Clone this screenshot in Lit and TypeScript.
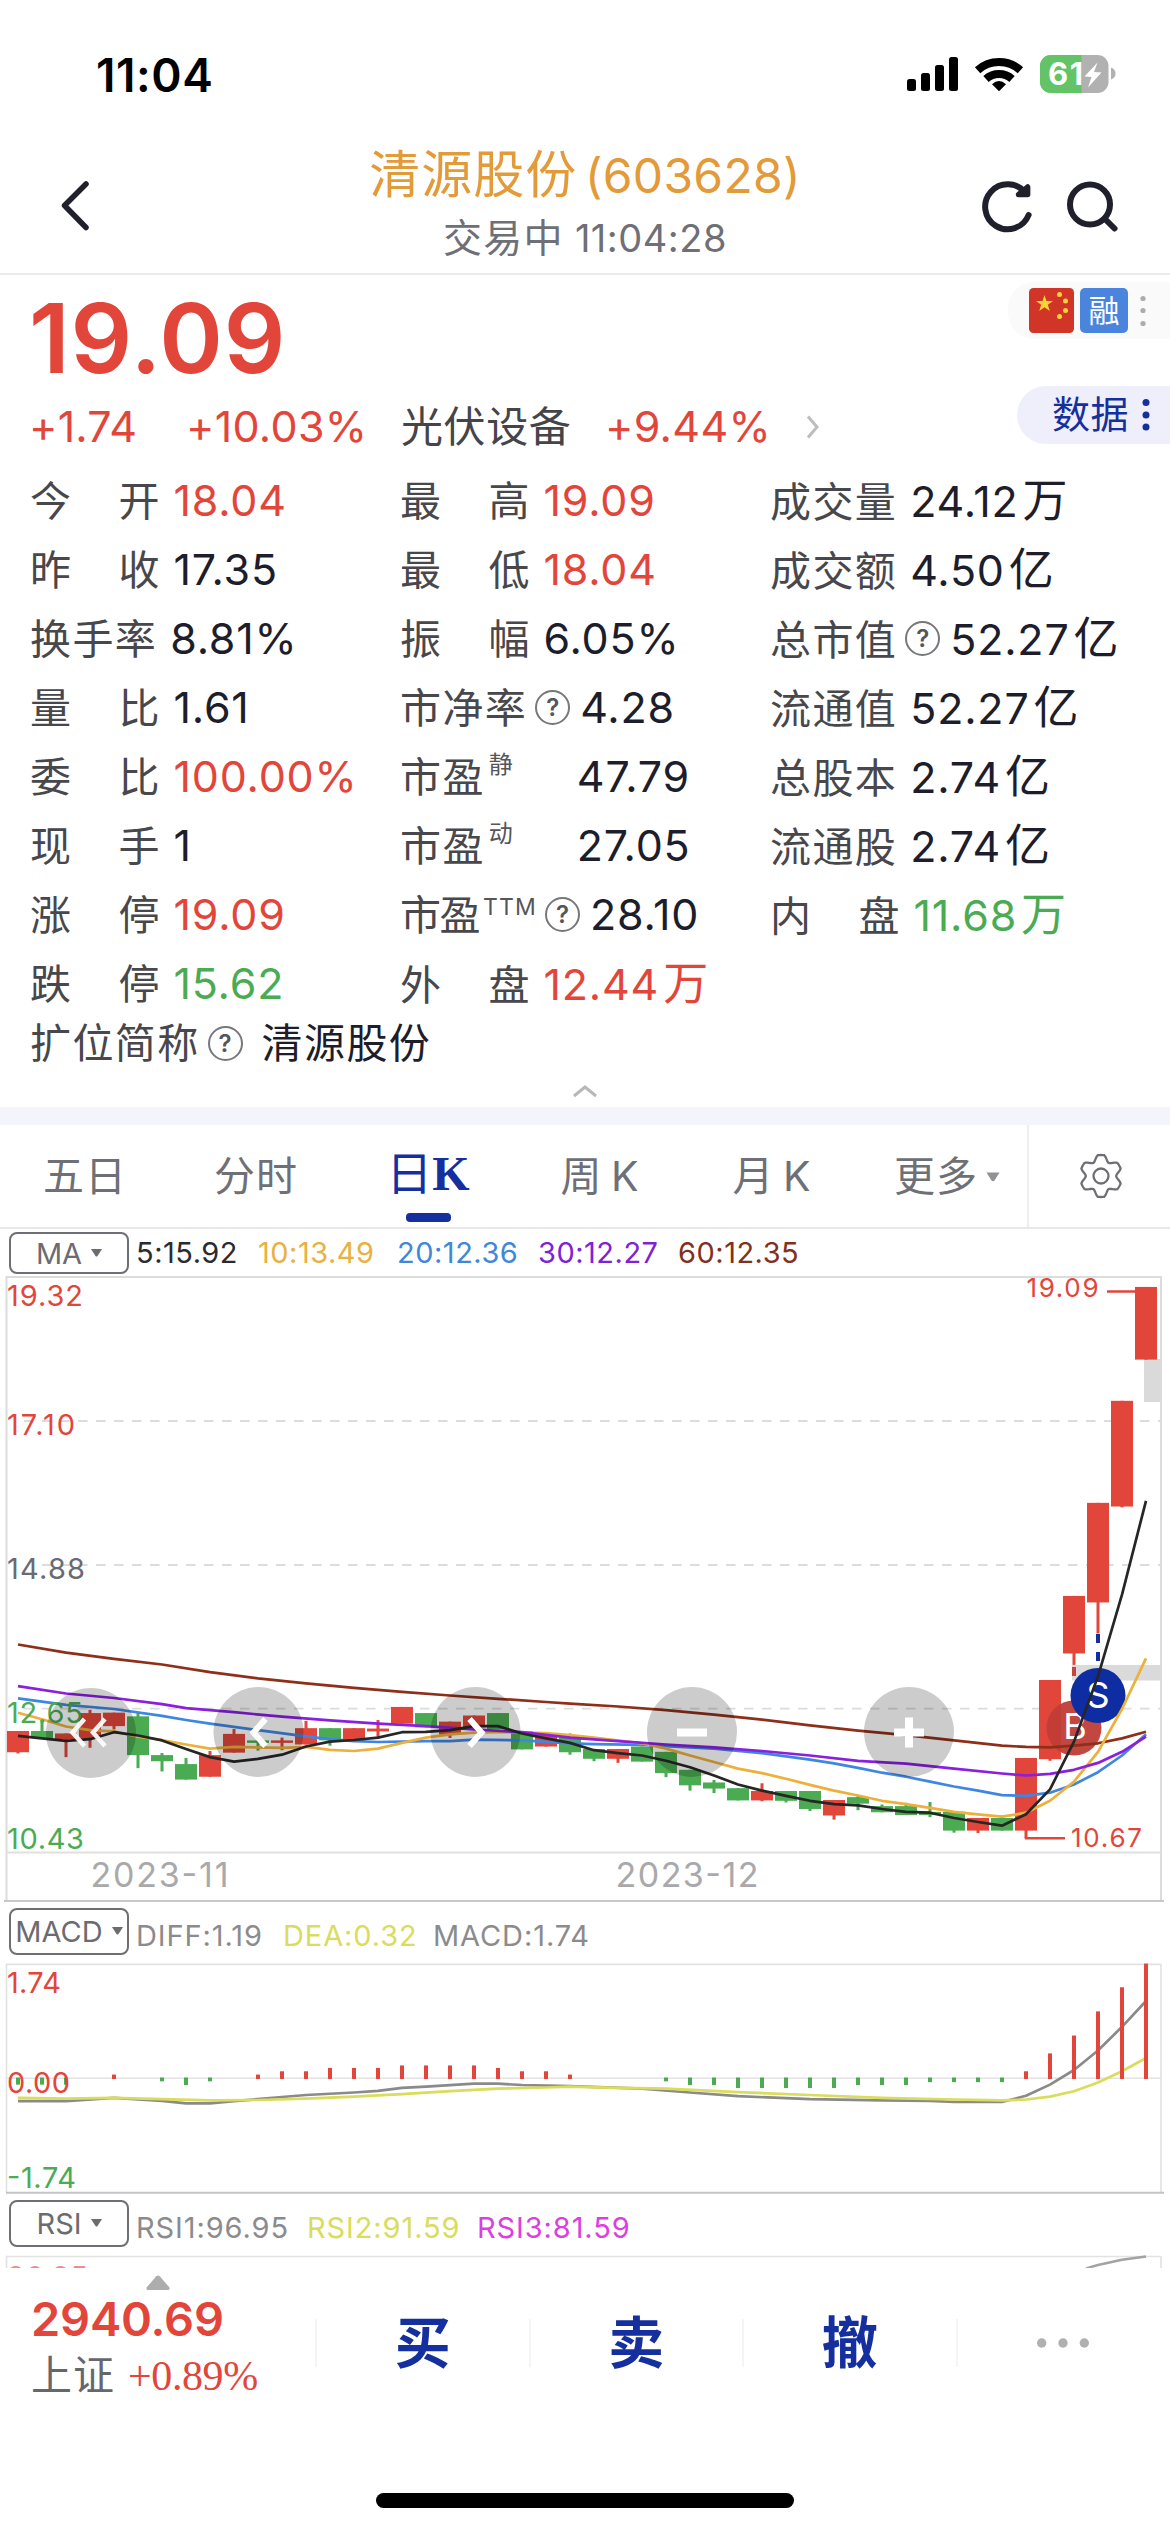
import { LitElement, html, css, svg } from "lit";
import { customElement, property } from "lit/decorators.js";
import { classMap } from "lit/directives/class-map.js";

const RED = "#e2463a";
const GREEN = "#4bab52";
const BLUE = "#152f9e";

/* ---------- status bar ---------- */
@customElement("status-bar")
class StatusBar extends LitElement {
  static styles = css`
    :host { display: flex; height: 138px; justify-content: space-between; padding: 0 54px 0 96px; box-sizing: border-box; }
    .time { font-size: 46px; font-weight: 600; line-height: 54px; margin-top: 48px; color: #000; letter-spacing: 0.6px; }
    .icons { width: 210px; height: 40px; margin-top: 54px; }
    .level { font-size: 31px; font-weight: 700; fill: #fff; }
  `;
  render() {
    return html`
      <div class="time">11:04</div>
      <svg class="icons" viewBox="906 54 210 40">
        <rect x="907" y="79" width="9" height="12" rx="2.5" />
        <rect x="921" y="73" width="9" height="18" rx="2.5" />
        <rect x="935" y="65" width="9" height="26" rx="2.5" />
        <rect x="949" y="57" width="9" height="34" rx="2.5" />
        <g fill="none" stroke="#000" stroke-width="8">
          <path d="M977.6 70.2 A32 32 0 0 1 1020.4 70.2" />
          <path d="M986 79 A19.5 19.5 0 0 1 1012 79" />
        </g>
        <path d="M992 84.3 Q999 77.6 1006 84.3 L999 91.3 Z" />
        <clipPath id="cell"><rect x="1040" y="55" width="68.500" height="38" rx="11" /></clipPath>
        <g clip-path="url(#cell)">
          <rect x="1040" y="54" width="70" height="40" fill="#b1b1b1" />
          <rect x="1040" y="54" width="41.500" height="40" fill="#62c466" />
        </g>
        <path d="M1111 67.500 Q1115.500 69 1115.500 73.500 Q1115.500 78 1111 79.500 Z" fill="#b1b1b1" />
        <text class="level" x="1048" y="85.300" textLength="35">61</text>
        <path d="M1097.500 62.500 L1084.500 76.500 L1091.500 77 L1088 87.500 L1101.500 72.500 L1094 72 Z" fill="#fff" />
      </svg>
    `;
  }
}

/* ---------- title bar ---------- */
@customElement("title-bar")
class TitleBar extends LitElement {
  static styles = css`
    :host { display: grid; grid-template-columns: 300px 1fr 300px; height: 137px; box-sizing: border-box; border-bottom: 2px solid #ebebed; }
    .back { width: 32px; height: 54px; margin: 40px 0 0 59px; }
    .center { display: flex; flex-direction: column; align-items: center; }
    .name { font-size: 48px; line-height: 60px; margin-top: 7px; color: #e39a38; white-space: nowrap; letter-spacing: 0.3px; word-spacing: -6px; }
    .cn { font-size: 51px; letter-spacing: 1px; }
    .state { font-size: 38px; line-height: 46px; margin-top: 9px; color: #6e6f77; white-space: nowrap; letter-spacing: 0.5px; }
    .state .cn { font-size: 39px; letter-spacing: 1.2px; }
    .tools { width: 150px; height: 60px; margin: 38px 0 0 104px; }
  `;
  render() {
    return html`
      <svg class="back" viewBox="59 178 32 54" fill="none" stroke="#20202c" stroke-width="5.500" stroke-linecap="round" stroke-linejoin="round">
        <path d="M86 184 L64.500 205.500 L86 227.500" />
      </svg>
      <div class="center">
        <div class="name"><span class="cn">清源股份</span> (603628)</div>
        <div class="state"><span class="cn">交易中</span> 11:04:28</div>
      </div>
      <svg class="tools" viewBox="974 176 150 60" fill="none" stroke="#20202c" stroke-width="6" stroke-linecap="round" stroke-linejoin="round">
        <path d="M1028.600 215 A22.500 22.500 0 1 1 1025.500 193" />
        <path d="M1027.600 187 V194.500 H1018.500 Z" stroke-width="5.500" fill="#20202c" />
        <circle cx="1090" cy="204.500" r="20" />
        <path d="M1105.500 219.500 L1114.500 228.500" />
      </svg>
    `;
  }
}

/* ---------- price block ---------- */
@customElement("price-block")
class PriceBlock extends LitElement {
  static styles = css`
    :host { display: flex; justify-content: space-between; height: 191px; }
    .left { padding-left: 29px; display: flex; flex-direction: column; }
    .price { font-size: 96.500px; font-weight: 600; line-height: 110px; margin-top: 8px; color: #e2463a; letter-spacing: 0.8px; }
    .line { display: flex; align-items: baseline; font-size: 43px; line-height: 56px; margin-top: 5px; color: #e2463a; white-space: nowrap; font-weight: 400; }
    .chg { width: 157px; letter-spacing: 0.2px; }
    .pct { width: 215px; letter-spacing: 0.3px; }
    .sector { width: 204px; color: #454549; font-size: 42px; letter-spacing: 0.6px; }
    .spct { width: 199px; letter-spacing: 0.3px; }
    .go { width: 16px; height: 26px; align-self: center; }
    .right { display: flex; flex-direction: column; align-items: flex-end; }
    .tags { display: flex; align-items: center; box-sizing: border-box; height: 57px; width: 162px; margin-top: 7px; padding-left: 21px; background: #fafafa; border-radius: 26px 0 0 26px; }
    .flag { width: 45px; height: 45px; }
    .rong { width: 48px; height: 45px; margin-left: 6px; border-radius: 5px; background: #4a84dc; color: #fff; font-size: 31px; line-height: 45px; text-align: center; }
    .dots { width: 8px; height: 40px; margin-left: 11px; }
    .data { display: flex; align-items: center; box-sizing: border-box; height: 58px; width: 153px; margin-top: 47px; padding-left: 35px; background: #eeeffb; border-radius: 29px 0 0 29px; color: #152f9e; font-size: 38px; letter-spacing: 0.5px; }
    .data span { line-height: 40px; padding-bottom: 2px; }
    .data .dots { margin-left: 13px; }
  `;
  render() {
    return html`
      <div class="left">
        <div class="price">19.09</div>
        <div class="line">
          <span class="chg">+1.74</span><span class="pct">+10.03%</span><span class="sector">光伏设备</span><span class="spct">+9.44%</span>
          <svg class="go" viewBox="0 0 16 26" fill="none" stroke="#bdbdbd" stroke-width="3"><path d="M4 2.500 L13 13 L4 23.500" /></svg>
        </div>
      </div>
      <div class="right">
        <div class="tags">
          <svg class="flag" viewBox="0 0 45 45">
            <rect width="45" height="45" rx="4.500" fill="#d03527" />
            <g fill="#fbd338">
              <path d="M15.500 7 L17.500 13 L24 13 L18.800 16.800 L20.800 23 L15.500 19.200 L10.200 23 L12.200 16.800 L7 13 L13.500 13 Z" />
              <circle cx="30.500" cy="6.500" r="2.500" /><circle cx="36.500" cy="13" r="2.500" />
              <circle cx="36.500" cy="22.500" r="2.500" /><circle cx="30.500" cy="28.500" r="2.500" />
            </g>
          </svg>
          <span class="rong">融</span>
          <svg class="dots" viewBox="0 0 8 40" fill="#acacac"><circle cx="4" cy="7.500" r="2.600" /><circle cx="4" cy="19.500" r="2.600" /><circle cx="4" cy="32.500" r="2.600" /></svg>
        </div>
        <div class="data">
          <span>数据</span>
          <svg class="dots" viewBox="0 0 8 40" fill="#152f9e"><circle cx="4" cy="7.500" r="3.500" /><circle cx="4" cy="20" r="3.500" /><circle cx="4" cy="32" r="3.500" /></svg>
        </div>
      </div>
    `;
  }
}

/* ---------- quote figures ---------- */
interface Quote {
  label: string;
  sup?: string;
  help?: boolean;
  wide?: boolean;
  value: string;
  unit?: string;
  tone?: "up" | "down";
}

const QUOTES: Quote[][] = [
  [
    { label: "今 开", value: "18.04", tone: "up" },
    { label: "昨 收", value: "17.35" },
    { label: "换手率", value: "8.81%" },
    { label: "量 比", value: "1.61" },
    { label: "委 比", value: "100.00%", tone: "up" },
    { label: "现 手", value: "1" },
    { label: "涨 停", value: "19.09", tone: "up" },
    { label: "跌 停", value: "15.62", tone: "down" },
  ],
  [
    { label: "最 高", value: "19.09", tone: "up" },
    { label: "最 低", value: "18.04", tone: "up" },
    { label: "振 幅", value: "6.05%" },
    { label: "市净率", help: true, value: "4.28" },
    { label: "市盈", sup: "静", wide: true, value: "47.79" },
    { label: "市盈", sup: "动", wide: true, value: "27.05" },
    { label: "市盈", sup: "TTM", help: true, value: "28.10" },
    { label: "外 盘", value: "12.44", unit: "万", tone: "up" },
  ],
  [
    { label: "成交量", value: "24.12", unit: "万" },
    { label: "成交额", value: "4.50", unit: "亿" },
    { label: "总市值", help: true, value: "52.27", unit: "亿" },
    { label: "流通值", value: "52.27", unit: "亿" },
    { label: "总股本", value: "2.74", unit: "亿" },
    { label: "流通股", value: "2.74", unit: "亿" },
    { label: "内 盘", value: "11.68", unit: "万", tone: "down" },
  ],
];

@customElement("quote-table")
class QuoteTable extends LitElement {
  static styles = css`
    :host { display: block; height: 641px; }
    .cols { display: grid; grid-template-columns: 370px 370px 1fr; padding-left: 30px; height: 552px; }
    .row { display: flex; align-items: baseline; height: 69px; line-height: 69px; white-space: nowrap; }
    .label { color: #47474c; font-size: 41px; letter-spacing: 1.4px; }
    .split { width: 129.500px; text-align-last: justify; letter-spacing: 0; }
    .split + .value { margin-left: 14px; }
    .sup { font-size: 24px; color: #55555a; position: relative; top: -19px; margin-left: 4px; letter-spacing: 0; }
    .sup.latin { font-size: 23px; letter-spacing: 1.2px; margin-left: 4px; top: -15px; }
    .tight { letter-spacing: -1.5px; }
    .help { align-self: center; box-sizing: border-box; width: 35px; height: 35px; margin-left: 8px; border: 2px solid #77777c; border-radius: 50%; color: #55555a; font-size: 24px; font-weight: 600; line-height: 31px; text-align: center; }
    .value { color: #1d1d2b; font-size: 43px; margin-left: 13px; letter-spacing: 0.8px; }
    .wide + .value { margin-left: 64px; }
    .help + .value { margin-left: 10px; }
    .up { color: #e2463a; }
    .down { color: #4bab52; }
    .unit { font-size: 45px; margin-left: 4px; letter-spacing: 0; }
    .last { display: flex; align-items: baseline; height: 50px; line-height: 50px; padding-left: 30px; white-space: nowrap; }
    .full { font-size: 41px; letter-spacing: 1.4px; color: #1d1d2b; margin-left: 19px; }
    .fold { display: block; width: 30px; height: 16px; margin: 15px auto 0; }
  `;
  row(q: Quote) {
    const latin = q.sup === "TTM";
    return html`<div class="row">
      <span class=${classMap({ label: true, split: q.label.includes(" "), tight: latin })}>${q.label}</span>${q.sup
        ? html`<span class=${classMap({ sup: true, latin, wide: !!q.wide })}>${q.sup}</span>`
        : ""}${q.help ? html`<span class="help">?</span>` : ""}<span
        class=${classMap({ value: true, up: q.tone === "up", down: q.tone === "down" })}
        >${q.value}${q.unit ? html`<span class="unit">${q.unit}</span>` : ""}</span>
    </div>`;
  }
  render() {
    return html`
      <div class="cols">${QUOTES.map((col) => html`<div>${col.map((q) => this.row(q))}</div>`)}</div>
      <div class="last"><span class="label">扩位简称</span><span class="help">?</span><span class="full">清源股份</span></div>
      <svg class="fold" viewBox="0 0 30 16" fill="none" stroke="#b8b8b8" stroke-width="3"><path d="M4 13 L15 4 L26 13" /></svg>
    `;
  }
}

/* ---------- period tabs ---------- */
@customElement("period-tabs")
class PeriodTabs extends LitElement {
  static styles = css`
    :host { display: block; }
    .band { height: 18px; background: #f4f5fa; }
    .bar { display: flex; height: 102px; border-bottom: 2px solid #e8e8e9; }
    .tabs { display: flex; width: 1029px; box-sizing: border-box; border-right: 2px solid #eeeef0; }
    .tab { display: flex; flex-direction: column; align-items: center; width: 172px; font-size: 41px; line-height: 56px; padding-top: 23px; color: #6e6f77; letter-spacing: 1px; word-spacing: -4px; white-space: nowrap; box-sizing: border-box; height: 102px; }
    .t0 { width: 170px; }
    .t5 { width: 169px; flex-direction: row; align-items: flex-start; justify-content: flex-start; padding-left: 36px; }
    .on { color: #152f9e; font-size: 46px; font-weight: 400; letter-spacing: 0; padding-top: 20px; }
    .serif { font-family: "Liberation Serif", serif; font-weight: 700; font-size: 48px; }
    .mark { width: 45px; height: 9px; border-radius: 4px; background: #152f9e; margin-top: 11px; }
    .tri { width: 14px; height: 10px; margin: 24px 0 0 8px; }
    .gear { width: 50px; height: 50px; margin: 26px 0 0 47px; }
  `;
  gear() {
    const pts: string[] = [];
    for (let d = 0; d < 360; d += 3) {
      const a = (d * Math.PI) / 180;
      const r = Math.min(21, 18.9 + 3.7 * Math.cos(6 * a));
      pts.push(`${(25 + r * Math.sin(a)).toFixed(2)} ${(25 - r * Math.cos(a)).toFixed(2)}`);
    }
    return `M${pts.join("L")}Z`;
  }
  render() {
    return html`
      <div class="band"></div>
      <div class="bar">
        <div class="tabs">
          <div class="tab t0">五日</div>
          <div class="tab">分时</div>
          <div class="tab on"><span>日<span class="serif">K</span></span><div class="mark"></div></div>
          <div class="tab">周 K</div>
          <div class="tab">月 K</div>
          <div class="tab t5">更多<svg class="tri" viewBox="0 0 14 10"><path d="M0.500 0.500 H13.500 L8.500 8.500 Q7 10 5.500 8.500 Z" fill="#919196" /></svg></div>
        </div>
        <svg class="gear" viewBox="0 0 50 50" fill="none" stroke="#6e6f74" stroke-width="2.300" stroke-linejoin="round">
          <path d=${this.gear()} /><circle cx="25" cy="25" r="7.500" />
        </svg>
      </div>
    `;
  }
}

/* ---------- indicator legend ---------- */
interface Legend { text: string; color: string; width: number; }

@customElement("legend-row")
class LegendRow extends LitElement {
  @property() name = "";
  @property({ type: Boolean, reflect: true }) first = false;
  @property({ attribute: false }) items: Legend[] = [];
  static styles = css`
    :host { display: flex; height: 61px; padding-left: 9px; }
    :host([first]) { height: 47px; }
    .pick { box-sizing: border-box; width: 120px; height: 47px; margin-top: 5.500px; border: 2px solid #6e6f74; border-radius: 8px; display: flex; align-items: center; justify-content: center; color: #6b6b70; font-size: 29px; letter-spacing: 0; }
    :host([first]) .pick { height: 42px; margin-top: 3px; }
    .tri { width: 11px; height: 8px; margin-left: 9px; }
    .values { display: flex; padding-left: 7px; font-size: 29px; line-height: 36px; margin-top: 16px; }
    :host([first]) .values { margin-top: 6px; }
    .item { white-space: nowrap; letter-spacing: 0.9px; }
    :host([first]) .item { letter-spacing: 0.5px; }
  `;
  render() {
    return html`
      <div class="pick"><span>${this.name}</span><svg class="tri" viewBox="0 0 11 8"><path d="M0 0 H11 L6.500 7 Q5.500 8 4.500 7 Z" fill="#6b6b70" /></svg></div>
      <div class="values">
        ${this.items.map((i) => html`<span class="item" style="color:${i.color};width:${i.width}px">${i.text}</span>`)}
      </div>
    `;
  }
}

/* ---------- candlestick plot ---------- */
const X0 = 18;
const STEP = 24;
const cx = (i: number) => X0 + i * STEP;

/* vertical levels are stored on a finer raster than the plot's pixels */
const ky = (v: number) => v / 2.45 - 16;
const my = (v: number) => v / 2.405 - 83;

type Candle = [up: number, top: number, bottom: number, high?: number, low?: number];
const CANDLES: Candle[] = [
  [1, 1154, 1206, 1154, 1209], [0, 1154, 1171, 1125, 1171], [1, 1160, 1174, 1160, 1218], [1, 1110, 1173, 1102, 1195],
  [1, 1109, 1142, 1109, 1150], [0, 1118, 1213, 1110, 1245], [0, 1213, 1228, 1208, 1253], [0, 1235, 1273, 1220, 1273],
  [1, 1213, 1266, 1203, 1266], [1, 1161, 1207, 1149, 1207], [0, 1177, 1183, 1177, 1202], [1, 1177, 1183, 1170, 1201],
  [1, 1147, 1187, 1129, 1187], [0, 1147, 1177, 1147, 1190], [1, 1147, 1178], [1, 1148, 1155, 1127, 1169],
  [1, 1095, 1136], [0, 1110, 1145], [1, 1131, 1163, 1131, 1171], [1, 1116, 1145], [0, 1110, 1150], [0, 1154, 1199],
  [1, 1163, 1192], [0, 1170, 1206, 1160, 1212], [0, 1198, 1222, 1198, 1228], [1, 1198, 1222, 1198, 1232], [0, 1192, 1229],
  [0, 1205, 1257, 1205, 1267], [0, 1249, 1287, 1249, 1300], [0, 1280, 1295, 1274, 1306], [0, 1294, 1324],
  [1, 1301, 1324, 1282, 1326], [0, 1301, 1325, 1301, 1329], [0, 1301, 1345, 1301, 1350], [1, 1323, 1361, 1323, 1371],
  [0, 1316, 1332, 1312, 1348], [0, 1338, 1353, 1334, 1353], [0, 1338, 1360, 1330, 1360], [0, 1352, 1360, 1328, 1365],
  [0, 1352, 1398, 1352, 1403], [1, 1367, 1398, 1367, 1404], [0, 1367, 1398, 1361, 1398], [1, 1220, 1398, 1220, 1416],
  [1, 1029, 1223, 1029, 1227], [1, 823, 964, 823, 992], [1, 595, 839, 595, 915], [1, 345, 604, 345, 606], [1, 66, 244],
];

type Pt = [number, number];
const MA60: Pt[] = [[0, 942], [2, 962], [4, 977], [6, 991], [8, 1010], [10, 1025], [12, 1037], [14, 1048], [16, 1058], [18, 1067], [20, 1075], [22, 1083], [23, 1087], [25, 1094], [27, 1103], [29, 1114], [31, 1126], [33, 1140], [35, 1153], [37, 1164], [39, 1177], [41, 1190], [42, 1193], [43, 1194], [44, 1190], [45, 1184], [46, 1172], [47, 1156]];
const MA30: Pt[] = [[0, 1044], [2, 1062], [4, 1073], [6, 1088], [7, 1098], [9, 1108], [11, 1119], [13, 1128], [15, 1136], [17, 1142], [19, 1150], [21, 1157], [23, 1170], [25, 1179], [27, 1187], [29, 1194], [31, 1203], [33, 1214], [35, 1227], [37, 1234], [39, 1246], [41, 1258], [42, 1263], [43, 1259], [44, 1249], [45, 1232], [46, 1205], [47, 1168]];
const MA20: Pt[] = [[0, 1074], [1, 1082], [2, 1090], [4, 1100], [6, 1117], [7, 1127], [8, 1136], [10, 1152], [12, 1167], [13, 1174], [14, 1179], [15, 1181], [17, 1179], [18, 1179], [19, 1175], [21, 1177], [23, 1184], [24, 1186], [26, 1188], [27, 1191], [29, 1197], [31, 1208], [33, 1224], [34, 1233], [35, 1244], [36, 1256], [37, 1266], [38, 1278], [39, 1290], [40, 1300], [41, 1311], [42, 1313], [43, 1305], [44, 1285], [45, 1255], [46, 1214], [47, 1162]];
const MA10: Pt[] = [[0, 1109], [1, 1125], [2, 1143], [3, 1152], [4, 1155], [5, 1168], [6, 1176], [7, 1187], [8, 1197], [9, 1193], [11, 1195], [12, 1193], [13, 1200], [14, 1203], [15, 1197], [16, 1183], [17, 1170], [18, 1162], [19, 1158], [20, 1156], [22, 1159], [23, 1164], [24, 1170], [26, 1184], [27, 1197], [28, 1214], [29, 1230], [30, 1246], [31, 1257], [32, 1271], [33, 1286], [34, 1300], [35, 1312], [36, 1325], [37, 1333], [38, 1342], [39, 1352], [40, 1358], [41, 1364], [42, 1354], [43, 1325], [44, 1278], [45, 1205], [46, 1100], [47, 976]];
const MA5: Pt[] = [[0, 1166], [1, 1172], [2, 1178], [3, 1174], [4, 1157], [5, 1165], [6, 1177], [7, 1198], [8, 1218], [9, 1229], [10, 1222], [11, 1212], [12, 1192], [13, 1180], [14, 1176], [15, 1170], [16, 1157], [17, 1156], [18, 1152], [19, 1142], [20, 1142], [21, 1160], [22, 1172], [23, 1183], [24, 1201], [25, 1208], [26, 1214], [27, 1227], [28, 1243], [29, 1263], [30, 1285], [31, 1300], [32, 1313], [33, 1325], [34, 1333], [35, 1336], [36, 1345], [37, 1352], [38, 1354], [39, 1367], [40, 1377], [41, 1386], [42, 1358], [43, 1297], [44, 1180], [45, 1020], [46, 820], [47, 590]];
const DIFF: Pt[] = [[0, 532], [2, 532], [4, 524], [6, 531], [7, 537], [8, 537], [9, 532], [11, 522], [12, 517], [14, 511], [15, 507], [16, 500], [17, 497], [19, 490], [20, 490], [21, 493], [23, 496], [26, 502], [28, 511], [30, 520], [33, 527], [36, 530], [38, 531], [39, 534], [41, 534], [42, 519], [43, 492], [44, 457], [45, 410], [46, 353], [47, 291]];
const DEA: Pt[] = [[0, 524], [2, 526], [4, 524], [6, 527], [8, 530], [10, 529], [12, 526], [14, 521], [16, 515], [18, 508], [20, 502], [22, 499], [23, 497], [25, 500], [27, 502], [30, 510], [33, 517], [36, 524], [39, 528], [41, 530], [42, 528], [43, 521], [44, 508], [45, 487], [46, 460], [47, 428]];
const HIST: Pt[] = [[0, 491], [1, 491], [2, 491], [4, 468], [6, 483], [7, 492], [8, 483], [10, 468], [11, 460], [12, 460], [13, 452], [14, 452], [15, 452], [16, 446], [17, 446], [18, 446], [19, 446], [20, 452], [21, 460], [22, 460], [23, 468], [27, 483], [28, 492], [29, 492], [30, 499], [31, 499], [32, 499], [33, 499], [34, 499], [35, 492], [36, 492], [37, 492], [38, 485], [39, 485], [40, 485], [41, 485], [42, 460], [43, 417], [44, 374], [45, 316], [46, 258], [47, 201]];

const trace = (pts: Pt[], f: (v: number) => number, color: string) => svg`
  <polyline points=${pts.map(([i, v]) => `${cx(i)},${f(v).toFixed(1)}`).join(" ")} fill="none" stroke=${color} stroke-width="2.7" stroke-linejoin="round" />`;

@customElement("kline-plot")
class KlinePlot extends LitElement {
  static styles = css`
    :host { display: block; height: 626px; }
    .plot { display: block; width: 1170px; height: 626px; overflow: visible; }
    .axis { font-size: 29px; }
    .date { font-size: 34px; fill: #a9a9ab; }
    .note { font-size: 26px; fill: #e2463a; }
    .badge { font-size: 36px; fill: #fff; text-anchor: middle; }
  `;
  candle([up, top, bottom, high = top, low = bottom]: Candle, i: number) {
    const c = up ? RED : GREEN;
    return svg`
      <rect x=${cx(i) - 1.5} y=${ky(high)} width="3" height=${(low - high) / 2.45} fill=${c} />
      <rect x=${cx(i) - 11} y=${ky(top)} width="22" height=${(bottom - top) / 2.45} fill=${c} />`;
  }
  axis(text: string, y: number, width: number, color: string) {
    return svg`<text class="axis" x="7" y=${y} textLength=${width} fill=${color}>${text}</text>`;
  }
  render() {
    return html`<svg class="plot" viewBox="0 0 1170 626">
      <g stroke="#dcdcdc" stroke-width="2" fill="none">
        <path d="M6 0.900 H1162" /><path d="M6.500 0 V625 M1161 0 V625" /><path d="M6 576.500 H1161" stroke="#e0e0e0" />
        <path d="M4 625 H1164" stroke="#c8c8ca" />
        <path d="M24 145 H1160 M42 289 H1160 M24 432.600 H1160" stroke-dasharray="9.500 8.500" stroke-width="1.800" />
      </g>
      <g fill="#dadada">
        <rect x="1144" y="83" width="17" height="43" />
        <rect x="1072" y="389" width="89" height="15.500" />
      </g>
      ${CANDLES.map((c, i) => this.candle(c, i))}
      <rect x="1072" y="391" width="4" height="9" fill="#c8443b" />
      <rect x="1096" y="358" width="4" height="9" fill=${BLUE} /><rect x="1096" y="376" width="4" height="9" fill=${BLUE} />
      <circle cx="1074" cy="452" r="27.500" fill="#bf3d36" fill-opacity=".95" />
      <text class="badge" x="1075" y="462.500">B</text>
      <circle cx="1098" cy="419.500" r="27.500" fill="#0f2da2" />
      <text class="badge" x="1098" y="431.500">S</text>
      ${trace(MA60, ky, "#8e2f1a")} ${trace(MA20, ky, "#3f86e4")} ${trace(MA10, ky, "#edb03a")}
      ${trace(MA30, ky, "#8a1fe0")} ${trace(MA5, ky, "#262626")}
      ${this.axis("19.32", 30, 76, RED)} ${this.axis("17.10", 158.5, 68, RED)} ${this.axis("14.88", 303, 78, "#6a6a72")}
      ${this.axis("12.65", 446.5, 76, GREEN)} ${this.axis("10.43", 572.5, 77, GREEN)}
      <text class="note" x="1026.500" y="20.500" textLength="72">19.09</text>
      <path d="M1107 15.500 H1137" stroke=${RED} stroke-width="2.500" />
      <path d="M1026 561 V562.200 H1065" stroke=${RED} stroke-width="2.500" fill="none" />
      <text class="note" x="1071" y="570.500" textLength="71">10.67</text>
      <text class="date" x="90.500" y="611" textLength="138">2023-11</text>
      <text class="date" x="615.500" y="611" textLength="143">2023-12</text>
      <g fill="#000" fill-opacity=".2">
        <circle cx="91" cy="457" r="45" /><circle cx="258.500" cy="456" r="45" /><circle cx="475.500" cy="456" r="45" />
        <circle cx="692" cy="456" r="45" /><circle cx="909" cy="456" r="45" />
      </g>
      <g fill="none" stroke="#fff" stroke-width="6">
        <path d="M84.500 443 L72.500 456.500 L84.500 470 M105 443 L93 456.500 L105 470" stroke-opacity=".92" stroke-width="4.500" />
        <path d="M265.500 443 L253.500 456.500 L265.500 470" />
        <path d="M469.500 443 L481.500 456.500 L469.500 470" />
        <path d="M677 456.500 H707 M894 456.500 H924 M909 441.500 V471.500" stroke-width="8" />
      </g>
    </svg>`;
  }
}

/* ---------- MACD plot ---------- */
@customElement("macd-plot")
class MacdPlot extends LitElement {
  static styles = css`
    :host { display: block; height: 231px; }
    .plot { display: block; width: 1170px; height: 231px; }
    .axis { font-size: 29px; }
  `;
  render() {
    return html`<svg class="plot" viewBox="0 0 1170 231">
      <g stroke="#e2e2e3" stroke-width="1.600" fill="none">
        <path d="M6 1.400 H1161 M6.500 1 V229 M1161 1 V229 M6 115.300 H1161" />
        <path d="M6 229.700 H1164" stroke="#c4c4c6" stroke-width="2" />
      </g>
      ${trace(DIFF, my, "#8a8a8a")} ${trace(DEA, my, "#dadc5c")}
      ${HIST.map(([i, v]) => {
        const y = my(v);
        return svg`<rect x=${cx(i) - 2} y=${Math.min(y, 114.5)} width="4" height=${Math.abs(y - 114.5) + (v < 476 ? 1.5 : 0.5)} fill=${v < 476 ? RED : GREEN} />`;
      })}
      <text class="axis" x="7" y="30" textLength="54" fill=${RED}>1.74</text>
      <text class="axis" x="7" y="129.500" textLength="63" fill=${RED}>0.00</text>
      <text class="axis" x="7" y="225" textLength="69" fill=${GREEN}>-1.74</text>
    </svg>`;
  }
}

/* ---------- RSI plot, cut off by the trade bar ---------- */
@customElement("rsi-plot")
class RsiPlot extends LitElement {
  static styles = css`
    :host { display: block; height: 13px; overflow: hidden; }
    .plot { display: block; width: 1170px; height: 13px; }
    .axis { font-size: 29px; fill: #e2463a; opacity: 0.6; }
  `;
  render() {
    return html`<svg class="plot" viewBox="0 0 1170 13">
      <path d="M6 1.500 H1161 M6.500 1 V13 M1161 1 V13" stroke="#e2e2e3" stroke-width="1.600" fill="none" />
      <path d="M1086 13.500 L1098 10 L1122 4.800 L1146 1.500" stroke="#a3a3a3" stroke-width="2.400" fill="none" />
      <text class="axis" x="7" y="31.500" textLength="81">96.95</text>
    </svg>`;
  }
}

/* ---------- trade bar ---------- */
@customElement("trade-bar")
class TradeBar extends LitElement {
  static styles = css`
    :host { display: flex; flex-direction: column; height: 264px; background: #fff; }
    .main { display: flex; height: 225px; }
    .index { width: 315px; box-sizing: border-box; padding-left: 31px; display: flex; flex-direction: column; }
    .up { width: 24px; height: 15px; margin: 7px 0 0 115px; }
    .points { font-size: 47px; font-weight: 600; line-height: 56px; margin-top: 1px; height: 56px; color: #e2463a; letter-spacing: -0.2px; white-space: nowrap; }
    .line { font-size: 41px; line-height: 56px; letter-spacing: 1px; color: #66666d; white-space: nowrap; }
    .pct { font-family: "Liberation Serif", serif; font-size: 42px; color: #e2463a; margin-left: 13px; letter-spacing: -0.4px; }
    .act { width: 213.500px; box-sizing: border-box; height: 150px; color: #152f9e; font-size: 56px; font-weight: 700; line-height: 150px; text-align: center; display: flex; align-items: center; }
    .act span { flex: 1; }
    .act::before { content: ""; width: 2px; height: 48px; background: #f5f5f6; }
    .more { width: 52px; height: 12px; margin: 0 auto; }
    .home { width: 418px; height: 15px; border-radius: 8px; background: #000; margin: 0 auto; }
  `;
  render() {
    return html`
      <div class="main">
        <div class="index">
          <svg class="up" viewBox="0 0 24 15"><path d="M0.500 12.500 L10.300 1.200 Q12 -0.300 13.700 1.200 L23.500 12.500 Q24 15 22 15 H2 Q0 15 0.500 12.500 Z" fill="#adadad" /></svg>
          <div class="points">2940.69</div>
          <div class="line">上证<span class="pct">+0.89%</span></div>
        </div>
        <div class="act"><span>买</span></div>
        <div class="act"><span>卖</span></div>
        <div class="act"><span>撤</span></div>
        <div class="act"><svg class="more" viewBox="0 0 52 12" fill="#b0b0b2"><circle cx="4.700" cy="6" r="4.700" /><circle cx="26" cy="6" r="4.700" /><circle cx="47.300" cy="6" r="4.700" /></svg></div>
      </div>
      <div class="home"></div>
    `;
  }
}

@customElement("app-root")
class AppRoot extends LitElement {
  static styles = css`
    :host {
      display: flex; flex-direction: column; width: 1170px; height: 2532px; overflow: hidden; background: #fff;
      font-family: Inter, "Noto Sans CJK SC", sans-serif;
    }
  `;
  render() {
    return html`
      <status-bar></status-bar>
      <title-bar></title-bar>
      <price-block></price-block>
      <quote-table></quote-table>
      <period-tabs></period-tabs>
      <legend-row first name="MA" .items=${[
        { text: "5:15.92", color: "#2b2b2f", width: 122 },
        { text: "10:13.49", color: "#e8b142", width: 139 },
        { text: "20:12.36", color: "#3f87d9", width: 141 },
        { text: "30:12.27", color: "#7d22d6", width: 140 },
        { text: "60:12.35", color: "#82301d", width: 140 },
      ]}></legend-row>
      <kline-plot></kline-plot>
      <legend-row name="MACD" .items=${[
        { text: "DIFF:1.19", color: "#8b8b8e", width: 147 },
        { text: "DEA:0.32", color: "#dadc5c", width: 150 },
        { text: "MACD:1.74", color: "#8b8b8e", width: 160 },
      ]}></legend-row>
      <macd-plot></macd-plot>
      <legend-row name="RSI" .items=${[
        { text: "RSI1:96.95", color: "#8b8b8e", width: 171 },
        { text: "RSI2:91.59", color: "#dadc5c", width: 170 },
        { text: "RSI3:81.59", color: "#dc3ee0", width: 170 },
      ]}></legend-row>
      <rsi-plot></rsi-plot>
      <trade-bar></trade-bar>
    `;
  }
}
